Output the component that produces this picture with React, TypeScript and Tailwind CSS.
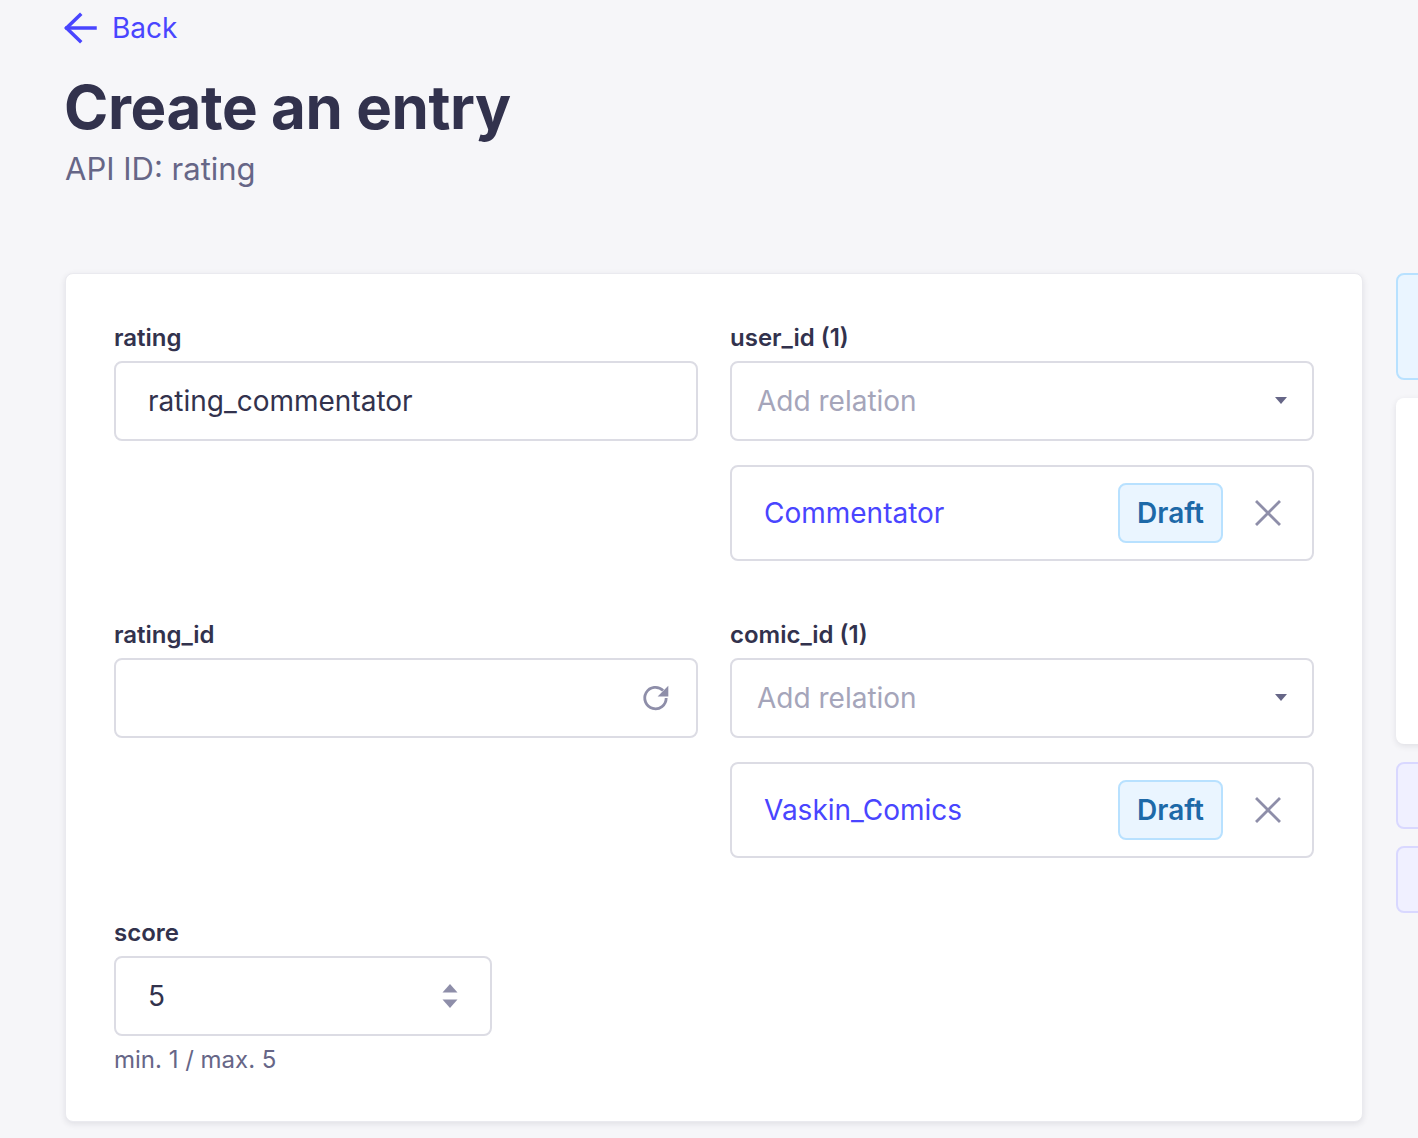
import * as React from 'react';

const font = { fontFamily: 'Inter, "Noto Sans", sans-serif' };

const ArrowLeft = () => (
  <svg width="34" height="32" viewBox="0 0 34 32" fill="none" stroke="#4945ff" strokeWidth="3.5" strokeLinecap="square">
    <path d="M32 16H4" />
    <path d="M17 3L3.5 16L17 29" />
  </svg>
);

const Caret = () => (
  <svg width="12" height="8" viewBox="0 0 12 8">
    <path d="M0 0h12L6 7z" fill="#666687" />
  </svg>
);

const CloseIcon = () => (
  <svg width="26" height="26" viewBox="0 0 26 26" stroke="#8e8ea9" strokeWidth="2.8" strokeLinecap="square">
    <path d="M2 2L24 24M24 2L2 24" />
  </svg>
);

const RefreshIcon = () => (
  <svg width="30" height="30" viewBox="0 0 28 28" fill="none">
    <path d="M23.5 14a10 10 0 1 1-2.9-7" stroke="#8e8ea9" strokeWidth="2.6" />
    <path d="M25.5 2.5v10h-10z" fill="#8e8ea9" />
  </svg>
);

const Spinner = () => (
  <svg width="16" height="26" viewBox="0 0 16 26">
    <path d="M8 1L15.5 9.5H0.5z" fill="#8e8ea9" />
    <path d="M0.5 16.5h15L8 25z" fill="#8e8ea9" />
  </svg>
);

const Label: React.FC<{ children: React.ReactNode }> = ({ children }) => (
  <label className="block text-[24px] font-semibold leading-[32px] text-[#32324d]">{children}</label>
);

const RelationField: React.FC<{ label: string; item: string }> = ({ label, item }) => (
  <div>
    <Label>{label}</Label>
    <div className="mt-[7px] flex h-[80px] items-center justify-between rounded-[8px] border-2 border-[#dcdce4] bg-white pl-[25px] pr-[25px]">
      <span className="text-[28px] text-[#a5a5ba]">Add relation</span>
      <Caret />
    </div>
    <div className="mt-[24px] flex h-[96px] items-center rounded-[8px] border-2 border-[#dcdce4] bg-white pl-[32px] pr-[31px]">
      <span className="flex-1 text-[28px] text-[#4945ff]">{item}</span>
      <span className="flex h-[60px] w-[105px] items-center justify-center rounded-[8px] border-2 border-[#b8e1ff] bg-[#eaf5ff] text-[28px] font-semibold text-[#1d69a8]">
        Draft
      </span>
      <span className="ml-[32px] flex items-center">
        <CloseIcon />
      </span>
    </div>
  </div>
);

export default function App() {
  return (
    <div className="min-h-screen w-full overflow-hidden bg-[#f6f6f9]" style={font}>
      <div className="pl-[63px] pt-[10px]">
        <a className="flex items-center gap-[15px] text-[28px] leading-[36px] text-[#4945ff]">
          <ArrowLeft />
          <span>Back</span>
        </a>
        <h1 className="mt-[26px] pl-[1px] text-[60px] font-bold leading-[70px] tracking-[-0.4px] text-[#32324d]">
          Create an entry
        </h1>
        <p className="mt-[7px] pl-[2px] text-[31px] leading-[40px] text-[#666687]">API ID: rating</p>
      </div>

      <div className="mt-[84px] flex gap-[33px] pl-[65px]">
        <div className="w-[1298px] shrink-0 rounded-[8px] border border-[#eaeaef] bg-white px-[48px] pb-[45px] pt-[48px] shadow-[0_2px_6px_rgba(33,33,52,0.1)]">
          <div className="grid grid-cols-2 gap-x-[32px]">
            <div>
              <Label>rating</Label>
              <div className="mt-[7px] flex h-[80px] items-center rounded-[8px] border-2 border-[#dcdce4] pl-[32px]">
                <span className="text-[28px] text-[#32324d]">rating_commentator</span>
              </div>
            </div>
            <RelationField label="user_id (1)" item="Commentator" />
          </div>

          <div className="mt-[58px] grid grid-cols-2 gap-x-[32px]">
            <div>
              <Label>rating_id</Label>
              <div className="mt-[7px] flex h-[80px] items-center justify-end rounded-[8px] border-2 border-[#dcdce4] pr-[25px]">
                <RefreshIcon />
              </div>
            </div>
            <RelationField label="comic_id (1)" item="Vaskin_Comics" />
          </div>

          <div className="mt-[59px]">
            <Label>score</Label>
            <div className="mt-[7px] flex h-[80px] w-[378px] items-center justify-between rounded-[8px] border-2 border-[#dcdce4] pl-[32px] pr-[32px]">
              <span className="text-[28px] text-[#32324d]">5</span>
              <Spinner />
            </div>
            <p className="mt-[8px] text-[24px] leading-[32px] text-[#666687]">min. 1 / max. 5</p>
          </div>
        </div>

        <div className="flex w-[300px] shrink-0 flex-col">
          <div className="h-[107px] rounded-[8px] border-2 border-[#b8e1ff] bg-[#eaf5ff]" />
          <div className="mt-[18px] h-[346px] rounded-[8px] bg-white shadow-[0_2px_6px_rgba(33,33,52,0.1)]" />
          <div className="mt-[18px] h-[67px] rounded-[8px] border-2 border-[#d9d8ff] bg-[#f0f0ff]" />
          <div className="mt-[17px] h-[67px] rounded-[8px] border-2 border-[#d9d8ff] bg-[#f0f0ff]" />
        </div>
      </div>
    </div>
  );
}
